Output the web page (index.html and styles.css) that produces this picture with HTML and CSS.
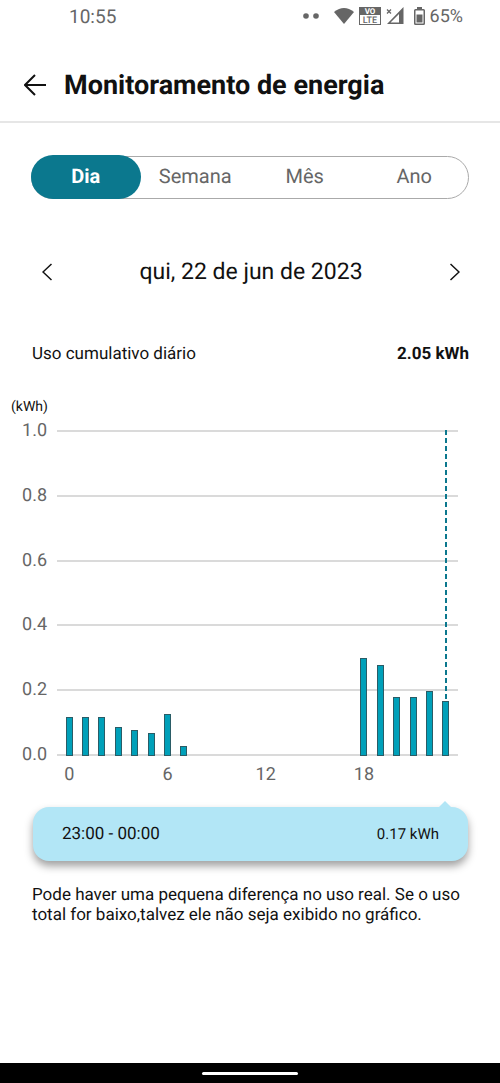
FILE: index.html
```html
<!DOCTYPE html>
<html lang="pt-BR">
<head>
<meta charset="utf-8">
<meta name="viewport" content="width=device-width, initial-scale=1">
<title>Monitoramento de energia</title>
<link rel="stylesheet" href="styles.css">
</head>
<body>
<div class="status">
  <span class="clock">10:55</span>
  <div class="status-icons">
    <svg class="dots" width="16" height="16" viewBox="0 0 16 16"><circle cx="3" cy="8" r="2.800"/><circle cx="13" cy="8" r="2.800"/></svg>
    <svg width="20" height="18" viewBox="0 0 20 18"><path d="M0 5Q10-3 20 5L10 17Z"/></svg>
    <svg class="volte" width="22" height="18" viewBox="0 0 22 18"><rect class="box" x=".5" y=".5" width="21" height="17"/><rect width="22" height="8"/><text class="vo" x="11" y="7">VO</text><text class="lte" x="11" y="16">LTE</text></svg>
    <svg width="18" height="18" viewBox="0 0 18 18"><path fill-rule="evenodd" d="M17.500 0V17H1ZM13 7L4.500 15.500H13Z"/><path d="M1 2.500L5 6.500M5 2.500L1 6.500" stroke="#666" stroke-width="1.300"/></svg>
    <svg class="battery" width="11" height="18" viewBox="0 0 11 18"><path fill-rule="evenodd" d="M3 0H8V2H9.500Q11 2 11 3.500V16.500Q11 18 9.500 18H1.500Q0 18 0 16.500V3.500Q0 2 1.500 2H3ZM1.500 3.500V16.500H9.500V3.500Z"/><path d="M2.500 7.500H8.500V15.500H2.500Z"/></svg>
    <span>65%</span>
  </div>
</div>
<header class="header">
  <button class="icon-button" aria-label="Voltar"><svg width="22" height="22" viewBox="0 0 22 22"><path d="M11 1L1 11L11 21M1 11H22"/></svg></button>
  <h1>Monitoramento de energia</h1>
</header>
<main class="main">
  <div class="tabs" role="tablist">
    <button class="tab active" role="tab" aria-selected="true">Dia</button>
    <button class="tab" role="tab" aria-selected="false">Semana</button>
    <button class="tab" role="tab" aria-selected="false">Mês</button>
    <button class="tab" role="tab" aria-selected="false">Ano</button>
  </div>
  <div class="date-nav">
    <button class="icon-button" aria-label="Dia anterior"><svg width="10" height="18" viewBox="0 0 10 18"><path d="M9.500 1L1 9L9.500 17"/></svg></button>
    <span class="date">qui, 22 de jun de 2023</span>
    <button class="icon-button" aria-label="Próximo dia"><svg width="10" height="18" viewBox="0 0 10 18"><path d="M.5 1L9 9L.5 17"/></svg></button>
  </div>
  <div class="summary"><span>Uso cumulativo diário</span><strong>2.05 kWh</strong></div>
  <section class="chart" aria-label="Consumo por hora">
    <div class="unit">(kWh)</div>
    <div class="y-axis"><span>1.0</span><span>0.8</span><span>0.6</span><span>0.4</span><span>0.2</span><span>0.0</span></div>
    <div class="plot">
      <div class="lines"><i></i><i></i><i></i><i></i><i></i><i></i></div>
      <div class="bars">
        <div class="slot"><div class="bar" style="height:12%"></div></div>
        <div class="slot"><div class="bar" style="height:12%"></div></div>
        <div class="slot"><div class="bar" style="height:12%"></div></div>
        <div class="slot"><div class="bar" style="height:9%"></div></div>
        <div class="slot"><div class="bar" style="height:8%"></div></div>
        <div class="slot"><div class="bar" style="height:7%"></div></div>
        <div class="slot"><div class="bar" style="height:13%"></div></div>
        <div class="slot"><div class="bar" style="height:3%"></div></div>
        <div class="slot"></div><div class="slot"></div><div class="slot"></div><div class="slot"></div><div class="slot"></div>
        <div class="slot"></div><div class="slot"></div><div class="slot"></div><div class="slot"></div><div class="slot"></div>
        <div class="slot"><div class="bar" style="height:30%"></div></div>
        <div class="slot"><div class="bar" style="height:28%"></div></div>
        <div class="slot"><div class="bar" style="height:18%"></div></div>
        <div class="slot"><div class="bar" style="height:18%"></div></div>
        <div class="slot"><div class="bar" style="height:20%"></div></div>
        <div class="slot"><div class="marker"></div><div class="bar" style="height:17%"></div></div>
      </div>
    </div>
    <div class="x-axis"><span class="h0">0</span><span class="h6">6</span><span class="h12">12</span><span class="h18">18</span></div>
  </section>
  <div class="detail"><span>23:00 - 00:00</span><span class="value">0.17 kWh</span></div>
  <p class="note">Pode haver uma pequena diferença no uso real. Se o uso total for baixo,talvez ele não seja exibido no gráfico.</p>
</main>
<footer class="system-nav"><div class="handle"></div></footer>
</body>
</html>
```
FILE: styles.css
```css
* { box-sizing: border-box; }
body {
  margin: 0;
  min-height: 100vh;
  display: flex;
  flex-direction: column;
  background: #fff;
  color: #111;
  font-family: Roboto, "Liberation Sans", sans-serif;
  font-size: 17px;
  text-rendering: geometricPrecision;
}
button {
  padding: 0;
  border: 0;
  background: none;
  color: inherit;
  font: inherit;
  text-rendering: inherit;
}
svg { display: block; flex: none; }
.status {
  display: flex;
  align-items: center;
  justify-content: space-between;
  height: 32px;
  padding: 0 37px 0 69px;
  color: #666;
  font-size: 19px;
}
.status-icons { display: flex; align-items: center; gap: 5px; font-size: 18px; }
.status-icons svg { fill: #666; }
.status-icons .dots { margin-right: 10px; }
.status-icons .battery { margin-left: 5px; }
.volte .box { fill: #fff; stroke: #666; }
.volte text { font-family: Roboto, sans-serif; font-size: 8px; font-weight: 700; text-anchor: middle; }
.volte .vo { fill: #fff; }
.volte .lte { font-size: 9px; font-weight: 500; }
.header {
  display: flex;
  align-items: center;
  gap: 18px;
  height: 91px;
  padding: 17px 24px 0;
  border-bottom: 2px solid #e6e6e6;
}
.header h1 { margin: 0; font-size: 27px; line-height: 32px; font-weight: 700; }
.icon-button svg { fill: none; stroke: #111; stroke-width: 2; }
.main { flex: 1; }
.tabs {
  display: flex;
  height: 44px;
  margin: 32px 31px 0;
  position: relative;
}
.tabs::before {
  content: "";
  position: absolute;
  inset: 1px 0 0;
  border: 1px solid #aaa;
  border-radius: 22px;
}
.tab {
  position: relative;
  flex: 1;
  padding-bottom: 2px;
  border-radius: 22px;
  color: #666;
  font-size: 20px;
}
.tab.active { background: #0b788e; color: #fff; font-weight: 700; }
.date-nav {
  display: flex;
  align-items: center;
  justify-content: space-between;
  margin: 57px 40px 0 42px;
}
.date-nav svg { stroke-width: 1.5; }
.date { font-size: 23px; line-height: 32px; }
.summary {
  display: flex;
  justify-content: space-between;
  margin: 54px 31px 0 32px;
  line-height: 24px;
}
.chart {
  display: grid;
  grid-template-columns: 47px 1fr;
  column-gap: 10px;
  margin: 32px 42px 0 0;
  color: #666;
  font-size: 18px;
}
.unit { grid-column: 1 / -1; padding: 0 0 5px 11px; color: #111; font-size: 14px; line-height: 18px; }
.y-axis {
  display: flex;
  flex-direction: column;
  justify-content: space-between;
  height: 344px;
  text-align: right;
  line-height: 20px;
}
.plot { display: grid; margin: 9px 0; }
.lines, .bars { grid-area: 1 / 1; }
.lines { display: flex; flex-direction: column; justify-content: space-between; }
.lines i { height: 2px; background: #dadada; }
.bars { display: grid; grid-template-columns: repeat(24, 1fr); padding: 0 4px; }
.slot { display: flex; flex-direction: column; align-items: center; justify-content: flex-end; }
.bar { flex: none; width: 7px; background: #00a0b9; border: 1px solid #2a5c66; }
.marker {
  flex: 1;
  width: 2px;
  background: repeating-linear-gradient(#0b788e 0 5px, transparent 5px 8px);
}
.x-axis {
  grid-column: 2;
  display: grid;
  grid-template-columns: repeat(24, 1fr);
  padding: 0 4px;
  line-height: 20px;
}
.x-axis span { display: flex; justify-content: center; width: 100%; min-width: 0; }
.h0 { grid-column: 1; }
.h6 { grid-column: 7; }
.h12 { grid-column: 13; }
.h18 { grid-column: 19; }
.detail {
  position: relative;
  display: flex;
  align-items: center;
  justify-content: space-between;
  height: 54px;
  margin: 22px 32px 0 33px;
  padding: 0 29px;
  border-radius: 16px;
  background: #b2e6f6;
  box-shadow: 0 5px 9px rgba(0, 0, 0, .38);
}
.detail::before {
  content: "";
  position: absolute;
  top: -6px;
  right: 17px;
  border: solid transparent;
  border-width: 0 6px 6px;
  border-bottom-color: #b2e6f6;
}
.detail .value { font-size: 15px; }
.note { margin: 24px 31px 0 32px; line-height: 20px; }
.system-nav {
  display: flex;
  align-items: center;
  justify-content: center;
  height: 20px;
  background: #000;
}
.handle { width: 96px; height: 3px; border-radius: 2px; background: #fff; }
```
